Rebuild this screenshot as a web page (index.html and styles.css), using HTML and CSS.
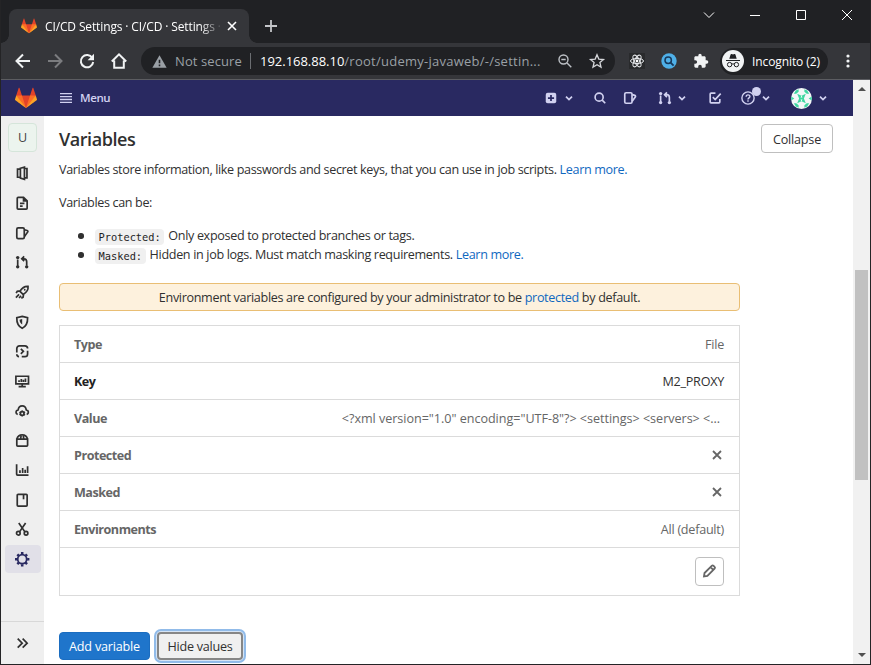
FILE: index.html
```html
<!DOCTYPE html>
<html lang="en">
<head>
<meta charset="utf-8">
<title>CI/CD Settings · CI/CD · Settings</title>
<link rel="stylesheet" href="styles.css">
</head>
<body>
<svg class="defs" width="0" height="0">
  <symbol id="tanuki" viewBox="0 0 36 36">
    <path fill="#e24329" d="M2 14l9.38 9v-9l-4-12.28c-.205-.632-1.176-.632-1.38 0z"/>
    <path fill="#e24329" d="M34 14l-9.38 9v-9l4-12.28c.205-.632 1.176-.632 1.38 0z"/>
    <path fill="#e24329" d="M18 34.38L3 14h30z"/>
    <path fill="#fc6d26" d="M18 34.38L11.38 14H2l4 11z"/>
    <path fill="#fc6d26" d="M18 34.38L24.62 14H34l-4 11z"/>
    <path fill="#fca326" d="M2 14L.1 20.16c-.18.565 0 1.2.5 1.56L18 34.38z"/>
    <path fill="#fca326" d="M34 14l1.9 6.16c.18.565 0 1.2-.5 1.56L18 34.38z"/>
  </symbol>
  <symbol id="chev" viewBox="0 0 10 10"><path d="M2 3.600l3 3 3-3"/></symbol>
  <symbol id="issues" viewBox="0 0 16 16"><rect x="2" y="2" width="8.300" height="12" rx="1.500"/><path d="M10.500 4.200l3 .8c.8.3 1 .9.7 1.600l-3.700 5.200"/></symbol>
  <symbol id="merge" viewBox="0 0 16 16"><path d="M3 5v8M13 12V7.500c0-2-1-3.300-3-3.300H8M10.200 1.500L7.500 4.200l2.700 2.700"/><g class="solid"><circle cx="3" cy="2.900" r="1.900"/><circle cx="3" cy="13.200" r="1.900"/><circle cx="13" cy="13.200" r="1.900"/></g></symbol>
  <symbol id="cross" viewBox="0 0 12 12"><path d="M2 2l8 8M10 2l-8 8"/></symbol>
</svg>
<div class="window">
  <div class="tabstrip">
    <div class="tab">
      <svg class="favicon"><use href="#tanuki"/></svg>
      <span class="tab-title">CI/CD Settings · CI/CD · Settings ·</span>
      <svg class="tab-close"><use href="#cross"/></svg>
    </div>
    <svg class="new-tab" viewBox="0 0 14 14"><path d="M7 1v12M1 7h12"/></svg>
    <div class="controls">
      <svg viewBox="0 0 12 12"><path d="M1 3.500l5 5 5-5"/></svg>
      <svg viewBox="0 0 12 12"><path d="M1 6.500h10"/></svg>
      <svg viewBox="0 0 12 12"><path d="M1.500 1.500h9v9h-9z"/></svg>
      <svg viewBox="0 0 12 12"><path d="M1 1l10 10M11 1L1 11"/></svg>
    </div>
  </div>
  <div class="toolbar">
    <svg class="nav-ic" viewBox="0 0 16 16"><path d="M15 8H2M8 1.500L1.500 8 8 14.500"/></svg>
    <svg class="nav-ic off" viewBox="0 0 16 16"><path d="M1 8h13M8 1.500L14.500 8 8 14.500"/></svg>
    <svg class="nav-ic" viewBox="0 0 16 16"><path d="M13.300 4.800A6.200 6.200 0 1 0 14.200 9"/><path class="solid" d="M15 .8v6.400H8.600z"/></svg>
    <svg class="nav-ic" viewBox="0 0 16 16"><path d="M.8 8.500L8 1.300l7.200 7.200M3.200 7.500v7.300h9.600V7.500"/></svg>
    <div class="omnibox">
      <svg class="warn" viewBox="0 0 16 14"><path d="M8 .3L15.700 13.700H.3z" fill="#9aa0a6"/><path d="M8 5v4M8 10.300v1.700" stroke="#202124" stroke-width="1.700"/></svg>
      <span class="insecure">Not secure</span>
      <span class="sep"></span>
      <span class="url"><b>192.168.88.10</b>/root/udemy-javaweb/-/settin...</span>
      <svg class="zoom-ic" viewBox="0 0 14 14"><circle cx="5.500" cy="5.500" r="4.500"/><path d="M3.300 5.500h4.400M9 9l4.300 4.300"/></svg>
      <svg class="star" viewBox="0 0 16 16"><path d="M8 1.800l1.800 4.300 4.700.4-3.600 3 1.100 4.600L8 11.700l-4 2.400 1.100-4.600-3.600-3 4.700-.4z"/></svg>
    </div>
    <svg class="react" viewBox="0 0 16 16"><rect width="16" height="16" fill="#292a2c"/><g fill="none" stroke="#e8eaed"><ellipse cx="8" cy="8" rx="6.500" ry="2.600"/><ellipse cx="8" cy="8" rx="6.500" ry="2.600" transform="rotate(60 8 8)"/><ellipse cx="8" cy="8" rx="6.500" ry="2.600" transform="rotate(120 8 8)"/></g><circle cx="8" cy="8" r="1.400" fill="#fff"/></svg>
    <svg class="finder" viewBox="0 0 16 16"><circle cx="8" cy="8" r="7.700" fill="#4fb0e8"/><circle cx="7.200" cy="7.200" r="3.200" fill="none" stroke="#17395c" stroke-width="1.500"/><path d="M9.600 9.600l3 3" stroke="#17395c" stroke-width="1.900"/></svg>
    <svg class="puzzle" viewBox="0 0 24 24"><path fill="#f1f3f4" d="M20.500 11H19V7c0-1.100-.9-2-2-2h-4V3.500a2.500 2.500 0 0 0-5 0V5H4c-1.100 0-2 .9-2 2v3.800h1.500a2.700 2.700 0 0 1 0 5.400H2V20c0 1.100.9 2 2 2h3.800v-1.500a2.700 2.700 0 0 1 5.400 0V22H17c1.100 0 2-.9 2-2v-4h1.500a2.500 2.500 0 0 0 0-5z"/></svg>
    <div class="incognito">
      <svg viewBox="0 0 22 22"><circle cx="11" cy="11" r="11" fill="#f1f3f4"/><path fill="#202124" d="M7.300 8.700L8.500 4.700c.2-.6.700-.8 1.300-.6l1.200.4 1.200-.4c.6-.2 1.100 0 1.300.6l1.200 4z"/><path d="M4 10.500h14M9.700 14.300c.8-.6 1.800-.6 2.600 0" fill="none" stroke="#202124"/><g fill="none" stroke="#202124"><circle cx="7.600" cy="14.600" r="2.200"/><circle cx="14.400" cy="14.600" r="2.200"/></g></svg>
      <span>Incognito (2)</span>
    </div>
    <svg class="dots" viewBox="0 0 4 14"><circle cx="2" cy="2" r="1.600"/><circle cx="2" cy="7" r="1.600"/><circle cx="2" cy="12" r="1.600"/></svg>
  </div>
  <div class="viewport">
    <div class="page">
      <header class="topbar">
        <svg class="logo"><use href="#tanuki"/></svg>
        <svg class="burger" viewBox="0 0 12 10"><path d="M0 .7h12M0 3.600h12M0 6.500h12M0 9.400h12"/></svg>
        <span class="menu">Menu</span>
        <div class="actions">
          <svg class="i plus" viewBox="0 0 16 16"><rect x="2" y="2" width="12" height="12" rx="2.200" fill="#d1d1f0"/><path d="M8 4.500v7M4.500 8h7" stroke="#292961" stroke-width="2"/></svg>
          <svg class="c"><use href="#chev"/></svg>
          <svg class="i find" viewBox="0 0 16 16"><circle cx="7" cy="7" r="4.600"/><path d="M10.500 10.500l3.500 3.500"/></svg>
          <svg class="i iss"><use href="#issues"/></svg>
          <svg class="i mr"><use href="#merge"/></svg>
          <svg class="c"><use href="#chev"/></svg>
          <svg class="i todo" viewBox="0 0 16 16"><path d="M8.500 2.500H3.500a1 1 0 0 0-1 1v9a1 1 0 0 0 1 1h9a1 1 0 0 0 1-1V9M5.500 7l2.700 2.700L14.500 3"/></svg>
          <span class="help"><svg class="i" viewBox="0 0 16 16"><circle cx="8" cy="8" r="7"/><path d="M5.900 6.600c0-2.900 4.300-2.700 4.300-.3C10.200 7.800 8 7.900 8 9.600M8 10.700v1.500"/></svg><i class="dot"></i></span>
          <svg class="c"><use href="#chev"/></svg>
          <svg class="avatar" viewBox="0 0 22 22"><circle cx="11" cy="11" r="11" fill="#f3f7f8"/><g fill="#3ed6a0"><path d="M6.500 6l4.500 2 4.500-2-2 5 2 5-4.500-2-4.500 2 2-5z"/><path d="M3 6l2-3.300L8 1.400v2.400L5.500 6zM19 6l-2-3.300-3-1.300v2.400L16.500 6zM3 16l2 3.300 3 1.300v-2.400L5.500 16zM19 16l-2 3.300-3 1.300v-2.400l2.500-2.200zM.2 9l3.300 2L.2 13zM21.800 9l-3.300 2 3.300 2z"/></g><path d="M11 7.800l1 2.200h-2zM11 14.200l1-2.200h-2z" fill="#fff"/></svg>
          <svg class="c last"><use href="#chev"/></svg>
        </div>
      </header>
      <div class="body">
        <nav class="sidebar">
          <div class="project">U</div>
          <ul class="side-list">
            <li><svg viewBox="0 0 16 16"><path d="M6 2.500l4.500-1.300v13.600L6 13.500zM6 3.500H2.800v9H6M10.500 2.800h2.800v10.400h-2.800"/></svg></li>
            <li><svg viewBox="0 0 16 16"><path d="M2.500 13.500v-11c0-.6.400-1 1-1h6l4 4v8c0 .6-.4 1-1 1h-9c-.6 0-1-.4-1-1zM5.500 8.200h5M5.500 11.200h3M9.500 1.500v4h4"/></svg></li>
            <li><svg><use href="#issues"/></svg></li>
            <li><svg><use href="#merge"/></svg></li>
            <li><svg viewBox="0 0 16 16"><path d="M14.500 1.500c-4-.4-6.500 1.400-9 5.500l3.500 3.500c4.100-2.500 6-5 5.500-9zM5.500 6.500l-3 .5-1.200 2M9.500 10.500l-.5 3-2 1.200M4.500 10.500L1 14M6.800 12l-2.300 2.500"/><circle class="solid" cx="10.800" cy="5.300" r="1"/></svg></li>
            <li><svg viewBox="0 0 16 16"><path d="M8 1.500L14 3c.2 6-1.500 9.500-6 11.800C3.500 12.500 1.800 9 2 3z"/><path class="solid" d="M8 4.500v6C6.500 9.500 5.300 8 5 5.200z"/></svg></li>
            <li><svg viewBox="0 0 16 16"><path d="M2 9.500V5a3 3 0 0 1 3-3h6a3 3 0 0 1 3 3M14 7.500V11a3 3 0 0 1-3 3H7.500M2 11.500c0 1.500 1 2.500 2.500 2.500M6.500 5.500L9.300 8.200 6.500 11"/></svg></li>
            <li><svg viewBox="0 0 16 16"><path d="M1 2.500h14v8.500H1zM4 14h8M8 11v3M4.500 8.800V7M7 8.800V5.500M9.300 8.800V6.500M11.600 8.800V5"/></svg></li>
            <li><svg viewBox="0 0 16 16"><path d="M3 11.700C.4 10.700.4 7 3.500 6.500 4 3 6 2 8 2s4 1 4.500 4.500c3.100.5 3.100 4.200.5 5.200"/><circle cx="8" cy="10.500" r="2"/><path d="M8 7.300v1M8 12.700v1.300M5.100 8.800l1 .6M10 11.600l1.100.7M5.100 12.300l1-.7M10 9.400l1.100-.6"/></svg></li>
            <li><svg viewBox="0 0 16 16"><path d="M2 6.800h12v6.700c0 .6-.4 1-1 1H3c-.6 0-1-.4-1-1zM2 6.800C2.800 3.700 5 2 8 2s5.200 1.700 6 4.800M6.300 6l.7-4M9.700 6L9 2"/></svg></li>
            <li><svg viewBox="0 0 16 16"><path d="M1.800 1.500v11c0 .6.400 1 1 1H15M5.500 11V8M8.500 11V5.500M11.300 11V7.500M14 11V3.500"/></svg></li>
            <li><svg viewBox="0 0 16 16"><rect x="2.500" y="1.500" width="11" height="13" rx="1"/><path d="M9.500 2v5"/></svg></li>
            <li><svg viewBox="0 0 16 16"><circle cx="3.700" cy="12.500" r="2"/><circle cx="12.300" cy="12.500" r="2"/><path d="M5 11L11.800 1M11 11L4.200 1"/></svg></li>
            <li class="active"><svg viewBox="0 0 16 16"><circle cx="8" cy="8" r="5"/><path class="teeth" d="M8 0v2.500M8 13.500V16M0 8h2.500M13.500 8H16M2.600 2.600l1.600 1.600M11.800 11.800l1.600 1.600M2.600 13.400l1.600-1.600M11.800 4.200l1.600-1.600"/></svg></li>
          </ul>
          <div class="expand"><svg viewBox="0 0 16 16"><path d="M3 3l5 5-5 5M8.500 3l5 5-5 5"/></svg></div>
        </nav>
        <main class="content">
          <div class="heading">
            <h1>Variables</h1>
            <button class="btn collapse">Collapse</button>
          </div>
          <p class="intro">Variables store information, like passwords and secret keys, that you can use in job scripts. <a>Learn more.</a></p>
          <p class="can">Variables can be:</p>
          <ul class="bullets">
            <li><code>Protected:</code> <span>Only exposed to protected branches or tags.</span></li>
            <li><code>Masked:</code> <span>Hidden in job logs. Must match masking requirements. <a>Learn more.</a></span></li>
          </ul>
          <div class="alert"><span>Environment variables are configured by your administrator to be <a>protected</a> by default.</span></div>
          <dl class="vars">
            <div><dt>Type</dt><dd>File</dd></div>
            <div class="key"><dt>Key</dt><dd>M2_PROXY</dd></div>
            <div><dt>Value</dt><dd class="xml">&lt;?xml version="1.0" encoding="UTF-8"?&gt; &lt;settings&gt; &lt;servers&gt; &lt;...</dd></div>
            <div><dt>Protected</dt><dd class="no"><svg><use href="#cross"/></svg></dd></div>
            <div><dt>Masked</dt><dd class="no"><svg><use href="#cross"/></svg></dd></div>
            <div><dt>Environments</dt><dd>All (default)</dd></div>
            <div class="edit-row"><button class="btn edit"><svg viewBox="0 0 16 16"><path d="M2.200 13.800l.6-3.800 8-8a1.500 1.500 0 0 1 2.100 0l1.100 1.100a1.500 1.500 0 0 1 0 2.100l-8 8zM9.500 3.500L12.500 6.500"/></svg></button></div>
          </dl>
          <div class="buttons">
            <button class="btn add">Add variable</button>
            <button class="btn hide">Hide values</button>
          </div>
        </main>
      </div>
    </div>
    <div class="scrollbar">
      <i class="up"></i><i class="thumb"></i><i class="down"></i>
    </div>
  </div>
</div>
</body>
</html>
```
FILE: styles.css
```css
* { box-sizing: border-box; }
html, body { margin: 0; height: 100%; overflow: hidden; }
body { font-family: "Open Sans", "Noto Sans", sans-serif; font-size: 12.6px; color: #303030; background: #202124; }
.defs { position: absolute; }
svg { display: block; flex: none; fill: none; overflow: visible; }
h1, p, ul, dl, dt, dd { margin: 0; padding: 0; }
ul { list-style: none; }
a { color: #1068bf; }
.solid { fill: currentColor; stroke: none; }

.window { width: 871px; height: 665px; border: solid #242426; border-width: 0 1px 1px; display: flex; flex-direction: column; }

/* browser chrome */
.tabstrip { height: 43px; flex: none; background: #202124; display: flex; align-items: flex-end; padding-left: 8px; }
.tab { width: 240px; height: 34px; background: #35363a; border-radius: 8px 8px 0 0; display: flex; align-items: center; padding: 0 11px 0 12px; position: relative; }
.tab::before, .tab::after { content: ""; position: absolute; bottom: 0; width: 8px; height: 8px; }
.tab::before { left: -8px; background: radial-gradient(circle at 0 0, transparent 7.5px, #35363a 8px); }
.tab::after { right: -8px; background: radial-gradient(circle at 100% 0, transparent 7.5px, #35363a 8px); }
.favicon { width: 16px; height: 16px; }
.tab-title { margin-left: 8px; width: 176px; color: #fff; font-size: 12px; letter-spacing: -.13px; white-space: nowrap; overflow: hidden; -webkit-mask-image: linear-gradient(90deg, #000 155px, transparent 178px); }
.tab-close { width: 12px; height: 12px; margin-left: 6px; stroke: #fff; stroke-width: 1.6; }
.new-tab { width: 14px; height: 14px; margin: 0 0 10px 15px; stroke: #c4c6c9; stroke-width: 1.8; }
.controls { margin-left: auto; align-self: flex-start; display: flex; gap: 34px; padding: 9px 17px 0 0; }
.controls svg { width: 12px; height: 12px; stroke: #fff; stroke-width: 1; }
.toolbar { height: 37px; flex: none; background: #35363a; border-bottom: 1px solid #5c5d61; display: flex; align-items: center; padding-left: 14px; }
.nav-ic { width: 16px; height: 16px; margin-right: 16px; stroke: #f1f3f4; stroke-width: 2; color: #f1f3f4; }
.nav-ic.off { stroke: #7b7c7f; }
.omnibox { width: 474px; height: 28px; margin-left: -2px; border-radius: 14px; background: #202124; display: flex; align-items: center; padding-left: 11px; font-size: 13px; color: #9aa0a6; white-space: nowrap; }
.warn { width: 15px; height: 13px; margin-right: 8px; }
.insecure { width: 67px; letter-spacing: .1px; }
.sep { width: 1px; height: 16px; background: #6b6e72; margin: 0 9px 0 8px; }
.url { width: 298px; letter-spacing: .25px; }
.url b { font-weight: 400; color: #fff; letter-spacing: -.02px; }
.zoom-ic { width: 14px; height: 14px; stroke: #bdc1c6; stroke-width: 1.4; }
.star { width: 16px; height: 16px; margin-left: 17px; stroke: #d5d7da; stroke-width: 1.3; }
.react, .finder { width: 16px; height: 16px; margin-left: 14px; }
.finder { margin-left: 16px; }
.puzzle { width: 16px; height: 16px; margin-left: 16px; }
.incognito { width: 108px; height: 27px; margin-left: 11px; border-radius: 14px; background: #202124; display: flex; align-items: center; padding-left: 2px; color: #fff; font-size: 12px; white-space: nowrap; }
.incognito svg { width: 22px; height: 22px; margin-right: 8px; }
.incognito span { letter-spacing: -.1px; }
.dots { width: 4px; height: 14px; margin-left: 18px; fill: #f1f3f4; }

/* page */
.viewport { flex: 1; min-height: 0; display: flex; background: #fff; }
.page { flex: 1; display: flex; flex-direction: column; min-width: 0; }
.topbar { height: 36px; flex: none; background: #292961; display: flex; align-items: center; padding: 0 26px 0 14px; color: #d1d1f0; stroke: #d1d1f0; }
.logo { width: 22px; height: 22px; stroke: none; }
.burger { width: 12px; height: 10px; margin-left: 23px; stroke-width: 1.3; }
.menu { margin: -2px 0 0 8px; font-size: 11.5px; font-weight: 600; letter-spacing: -.4px; }
.actions { margin-left: auto; display: flex; align-items: center; }
.i { width: 14px; height: 14px; stroke-width: 1.9; }
.c { width: 10px; height: 10px; margin-left: 6px; stroke-width: 1.7; }
.plus { stroke: none; }
.find { margin-left: 19px; }
.iss { margin-left: 16px; }
.mr { margin-left: 21px; }
.mr + .c { margin-left: 5px; }
.todo { margin-left: 21px; }
.help { margin-left: 19px; position: relative; }
.help .i { stroke-width: 1.6; }
.dot { position: absolute; left: 11px; top: -4px; width: 9px; height: 9px; border-radius: 50%; background: #d1d1f0; }
.avatar { width: 21px; height: 21px; margin-left: 20px; stroke: none; }
.c.last { margin-left: 6px; margin-right: -1px; }

.body { flex: 1; min-height: 0; display: flex; }
.sidebar { width: 43px; flex: none; background: #efefef; display: flex; flex-direction: column; align-items: center; padding-top: 7px; }
.project { width: 29px; height: 29px; border: 1px solid #d5e5da; border-radius: 4px; background: #ecf4ee; font-size: 12.6px; line-height: 27px; text-align: center; color: #444; }
.side-list { padding-top: 7.5px; }
.side-list li { width: 36px; height: 28px; margin-bottom: 1.68px; border-radius: 4px; display: flex; align-items: center; justify-content: center; color: #303030; }
.side-list svg { width: 14.4px; height: 14.4px; stroke: currentColor; stroke-width: 1.9; }
.side-list .active { background: #e1e0e8; color: #292961; }
.side-list .active svg { stroke-width: 2; }
.side-list .teeth { stroke-width: 2.8; }
.expand { margin-top: auto; width: 100%; height: 43px; border-top: 1px solid #d8d8d8; display: flex; align-items: center; justify-content: center; }
.expand svg { width: 14.4px; height: 14.4px; stroke: #303030; stroke-width: 1.9; }

.content { flex: 1; min-width: 0; padding: 8px 20px 0 15px; white-space: nowrap; }
.heading { display: flex; justify-content: space-between; height: 37px; }
h1 { font-size: 18px; line-height: 31px; font-weight: 600; letter-spacing: -.45px; }
.btn { font: inherit; height: 28px; border: 1px solid #bfbfbf; border-radius: 4px; background: #fff; color: #303030; padding: 0; display: flex; align-items: center; justify-content: center; }
.collapse { width: 72px; height: 29px; padding-top: 1px; letter-spacing: -.2px; }
.intro, .can { line-height: 18px; height: 18px; letter-spacing: -.36px; }
.can { margin-top: 15px; }
.bullets { margin-top: 14px; padding-left: 36px; }
.bullets li { height: 19px; line-height: 19px; display: flex; align-items: center; letter-spacing: -.335px; position: relative; }
.bullets li::before { content: ""; position: absolute; left: -17px; top: 7px; width: 5.5px; height: 5.5px; border-radius: 50%; background: #303030; }
code { font: 10.35px/16px "DejaVu Sans Mono", monospace; letter-spacing: 0; background: #f0f0f0; border-radius: 4px; padding: 0 3.5px; margin: 3px 4px 0 0; color: #1f1f1f; }
.alert { width: 681px; height: 28px; margin-top: 19px; border: 1px solid #e9be74; border-radius: 4px; background: #fdf1dd; display: flex; align-items: center; justify-content: center; letter-spacing: -.34px; }
.vars { width: 681px; margin-top: 14px; border: 1px solid #dbdbdb; color: #666; }
.vars > div { height: 37px; padding: 0 15px 0 14px; display: flex; align-items: center; justify-content: space-between; border-bottom: 1px solid #dbdbdb; letter-spacing: -.25px; }
.vars dt { font-weight: 700; letter-spacing: -.5px; }
.vars .key { color: #303030; }
.vars .key dt { color: #222; }
.vars .xml { margin-right: 4px; letter-spacing: -.035px; }
.no svg { width: 12px; height: 12px; margin-right: 1px; stroke: #666; stroke-width: 1.8; }
.vars .edit-row { height: 47px; justify-content: flex-end; border-bottom: 0; }
.edit { width: 29px; height: 29px; }
.edit svg { width: 14.4px; height: 14.4px; stroke: #666; stroke-width: 2; }
.buttons { display: flex; gap: 7px; margin-top: 36px; }
.add { width: 91px; background: #1f75cb; border-color: #1b6dc0; color: #fff; letter-spacing: -.2px; }
.hide { width: 86px; background: #f0f0f0; border: 2px solid #868686; box-shadow: 0 0 0 1px #d5e4f5, 0 0 0 3px #91bbe9; letter-spacing: -.25px; }

.scrollbar { width: 17px; flex: none; background: #f1f1f1; display: flex; flex-direction: column; align-items: center; }
.up, .down { width: 0; height: 0; border: 4px solid transparent; }
.up { border-top: 0; border-bottom-color: #505050; margin-top: 7px; }
.down { border-bottom: 0; border-top-color: #505050; margin: auto 0 7px; }
.thumb { width: 13px; height: 210px; margin-top: 179px; background: #c1c1c1; }
```
